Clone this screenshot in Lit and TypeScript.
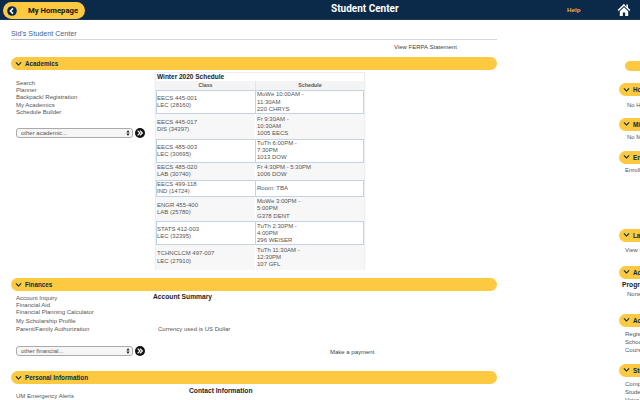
import { LitElement, html, css } from "lit";
import { customElement } from "lit/decorators.js";

const chevron = html`<svg class="chev" viewBox="0 0 8 6" width="7" height="6"><path d="M1 1.2 4 4.2 7 1.2" fill="none" stroke="#0b2a4a" stroke-width="1.3"/></svg>`;
const go = html`<svg class="go" viewBox="0 0 10 10" width="10" height="10"><circle cx="5" cy="5" r="5" fill="#111"/><path d="M2.6 2.6 5 5 2.6 7.4M5 2.6 7.4 5 5 7.4" fill="none" stroke="#fff" stroke-width="1.2"/></svg>`;

const rows = [
  ["EECS 445-001", "LEC (28160)", ["MoWe 10:00AM -", "11:30AM", "220 CHRYS"]],
  ["EECS 445-017", "DIS (34397)", ["Fr 9:30AM -", "10:30AM", "1005 EECS"]],
  ["EECS 485-003", "LEC (30695)", ["TuTh 6:00PM -", "7:30PM", "1013 DOW"]],
  ["EECS 485-020", "LAB (30740)", ["Fr 4:30PM - 5:30PM", "1006 DOW"]],
  ["EECS 499-118", "IND (14724)", ["Room: TBA"]],
  ["ENGR 455-400", "LAB (25780)", ["MoWe 3:00PM -", "5:00PM", "G378 DENT"]],
  ["STATS 412-003", "LEC (32395)", ["TuTh 2:30PM -", "4:00PM", "296 WEISER"]],
  ["TCHNCLCM 497-007", "LEC (27910)", ["TuTh 11:30AM -", "12:30PM", "107 GFL"]],
] as [string, string, string[]][];

@customElement("app-root")
export class AppRoot extends LitElement {
  static styles = css`
    :host { display: block; width: 640px; height: 400px; overflow: hidden; background: #fff;
      font-family: "Liberation Sans", Arial, sans-serif; font-size: 6px; color: #555; position: relative; }
    .top { height: 19px; background: #0b2a4a; border-bottom: 1px solid #1c3a5c; position: relative; }
    .home { display: flex; align-items: center; width: 82px; height: 17px; margin: 0 0 0 3px; box-sizing: border-box; position: relative; top: 2px;
      background: #fcc940; border-radius: 9px; padding-left: 4px; color: #111; font: 700 7.7px Roboto, sans-serif; }
    .home svg { margin-right: 11px; }
    .title { position: absolute; left: 331px; top: 3px; color: #fff; font: 700 10px Roboto, sans-serif; }
    .help { position: absolute; left: 567px; top: 6px; color: #e8b53a; font: 700 6.2px "Liberation Sans", sans-serif; }
    .house { position: absolute; left: 617px; top: 3px; }
    .cols { display: flex; align-items: flex-start; height: 380px; }
    .main { width: 486px; margin-left: 11px; flex: none; }
    .side { margin-left: 122px; width: 200px; flex: none; }
    .crumb { height: 19px; border-bottom: 1px solid #d5d8de; color: #3f5f8f; font-size: 7.2px; line-height: 27px; }
    .ferpa { height: 17px; line-height: 15px; margin-left: 383px; white-space: nowrap; color: #444; }
    .bar { height: 13px; background: #fcc940; border-radius: 7px; display: flex; align-items: center; padding-left: 4px;
      color: #0b2a4a; font-weight: 700; font-size: 6.3px; box-sizing: border-box; white-space: nowrap; }
    .chev { margin-right: 3px; flex: none; }
    .body { display: flex; position: relative; }
    .ac { height: 208px; }
    .fi { height: 80px; }
    .links { margin-left: 5px; width: 135px; flex: none; }
    .links div { line-height: 7.2px; white-space: nowrap; }
    .ac .links { padding-top: 10px; }
    .fi .links { padding-top: 4px; }
    .fi .links .g1 { margin-top: 1.3px; }
    .picker { display: flex; align-items: center; }
    .ac .picker { margin-top: 12px; }
    .fi .picker { margin-top: 12px; }
    .sel { position: relative; width: 117px; height: 10px; margin-right: 2px; }
    select { appearance: none; width: 100%; height: 100%; padding: 0 0 0 4px; margin: 0; box-sizing: border-box; border: 1px solid #aaa;
      border-radius: 3px; background: #f6f6f6; font: 6px/8px "Liberation Sans", sans-serif; color: #555; outline: none; display: block; }
    .arrows { position: absolute; right: 3px; top: 2px; }
    .sched { margin: 2px 0 0 4px; width: 210px; height: 196px; border: 1px solid #eee; box-sizing: border-box; flex: none;
      box-shadow: 0 1px 1px #e6e6e6; background: #fff; }
    .sched h3 { margin: 0; height: 8px; line-height: 7px; padding-left: 1px; font-size: 6.5px; color: #222; }
    .head { display: grid; grid-template-columns: 99px 109px; height: 9px; background: #f4f4f4; text-align: center;
      font-size: 5.3px; font-weight: 700; line-height: 9px; color: #555; }
    .head span + span { border-left: 1px solid #e4e4e4; }
    .row { display: grid; grid-template-columns: 99px 109px; box-sizing: border-box; background: #f7f7f7; align-items: stretch;
      line-height: 7.2px; }
    .row.tall { height: 24.3px; }
    .row.short { height: 17px; }
    .row.on { background: #fff; border: 1px solid #c3d2e6; grid-template-columns: 98px 108px; }
    .row.on .cc + .cc { border-left: 1px solid #c3d2e6; }
    .row:not(.on) .cc + .cc { border-left: 1px solid #fff; }
    .cc { display: flex; flex-direction: column; justify-content: center; padding-left: 1px; white-space: nowrap; }
    .row.on .cc:first-child { padding-left: 0; }
    .sum { position: absolute; left: 142px; top: 2px; font-weight: 700; font-size: 6.7px; color: #222; }
    .cur { position: absolute; left: 147px; top: 35px; }
    .pay { position: absolute; left: 319px; top: 58px; white-space: nowrap; color: #444; }
    .pi { height: 20px; }
    .pi .links { padding-top: 9px; }
    .contact { position: absolute; left: 178px; top: 3px; font-weight: 700; font-size: 6.7px; color: #222; white-space: nowrap; }
    .blank { height: 10px; width: 100px; margin: 41px 0 12px 6px; background: #fcc940; border-radius: 5px; }
    .st { padding-left: 6px; line-height: 7.8px; white-space: nowrap; }
    .bold { font-weight: 700; font-size: 6.7px; color: #222; }
    .s1 { padding: 6px 0 8.2px 8px; }
    .s2 { padding: 3px 0 9.2px 8px; }
    .s3 { padding: 3px 0 54.2px 6px; }
    .s4 { padding: 5px 0 11.2px 6px; }
    .s5 { padding: 2px 0 1px 3px; }
    .s6 { padding: 1px 0 15.4px 8px; }
    .s7 { padding-top: 4px; }
    .s8 { padding-bottom: 9.6px; }
  `;

  render() {
    const picker = (label: string) => html`<div class="picker"><div class="sel"><select><option>${label}</option></select>
      <svg class="arrows" viewBox="0 0 4 6" width="4" height="6"><path d="M2 0 3.6 2.4H.4ZM2 6 3.6 3.6H.4Z" fill="#222"/></svg></div>${go}</div>`;
    return html`
      <div class="top">
        <div class="home"><svg viewBox="0 0 10 10" width="10" height="10"><circle cx="5" cy="5" r="4.8" fill="#0b2a4a"/><path d="M6 2.4 3.4 5 6 7.6" fill="none" stroke="#fff" stroke-width="1.5"/></svg>My Homepage</div>
        <div class="title">Student Center</div>
        <div class="help">Help</div>
        <svg class="house" viewBox="0 0 14 14" width="14" height="14"><path d="M7 .8.6 7l1 1L7 2.9l5.4 5.1 1-1-2.4-2.3V1.6H9.4v2.6ZM2.8 8.2V13h3V9.6h2.4V13h3V8.2L7 4.2Z" fill="#fff"/></svg>
      </div>
      <div class="cols">
        <div class="main">
          <div class="crumb">Sid's Student Center</div>
          <div class="ferpa">View FERPA Statement</div>
          <div class="bar">${chevron}Academics</div>
          <div class="body ac">
            <div class="links">
              <div>Search</div><div>Planner</div><div>Backpack/ Registration</div><div>My Academics</div><div>Schedule Builder</div>
              ${picker("other academic...")}
            </div>
            <div class="sched">
              <h3>Winter 2020 Schedule</h3>
              <div class="head"><span>Class</span><span>Schedule</span></div>
              ${rows.map(([a, b, s], i) => html`<div class="row ${i % 2 ? "" : "on"} ${s.length === 3 ? "tall" : "short"}">
                <div class="cc"><span>${a}</span><span>${b}</span></div>
                <div class="cc">${s.map((l) => html`<span>${l}</span>`)}</div>
              </div>`)}
            </div>
          </div>
          <div class="bar">${chevron}Finances</div>
          <div class="body fi">
            <div class="links">
              <div>Account Inquiry</div><div>Financial Aid</div><div>Financial Planning Calculator</div><div class="g1">My Scholarship Profile</div><div class="g1">Parent/Family Authorization</div>
              ${picker("other financial...")}
            </div>
            <div class="sum">Account Summary</div>
            <div class="cur">Currency used is US Dollar</div>
            <div class="pay">Make a payment</div>
          </div>
          <div class="bar">${chevron}Personal Information</div>
          <div class="body pi">
            <div class="links"><div>UM Emergency Alerts</div></div>
            <div class="contact">Contact Information</div>
          </div>
        </div>
        <div class="side">
          <div class="blank"></div>
          <div class="bar">${chevron}Holds</div>
          <div class="st s1">No Holds</div>
          <div class="bar">${chevron}Milestones</div>
          <div class="st s2">No Milestones</div>
          <div class="bar">${chevron}Enrollment Dates</div>
          <div class="st s3">Enrollment Appointment</div>
          <div class="bar">${chevron}Latest</div>
          <div class="st s4">View Details</div>
          <div class="bar">${chevron}Advisor</div>
          <div class="st bold s5">Program Advisor</div>
          <div class="st s6">None</div>
          <div class="bar">${chevron}Academic Resources</div>
          <div class="st s7">Registration</div><div class="st">School</div><div class="st s8">Courses</div>
          <div class="bar">${chevron}Student</div>
          <div class="st s7">Compare</div><div class="st">Student</div><div class="st">Voter</div>
        </div>
      </div>
    `;
  }
}
